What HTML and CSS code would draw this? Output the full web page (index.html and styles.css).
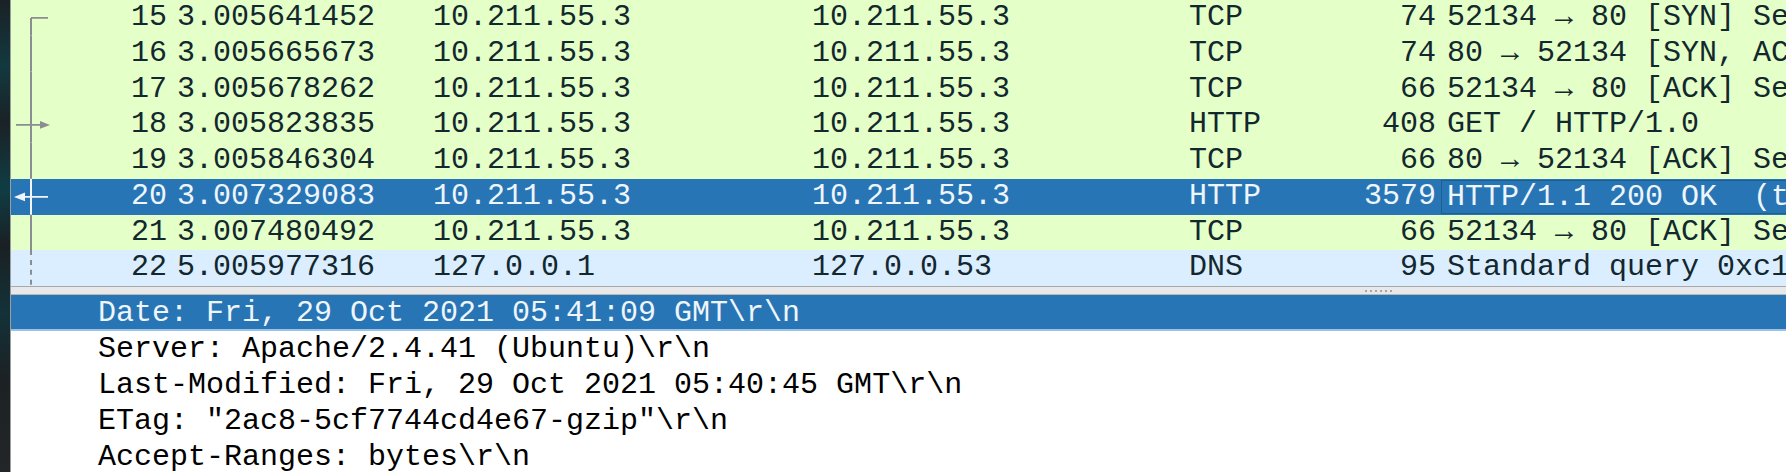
FILE: index.html
```html
<!DOCTYPE html>
<html>
<head>
<meta charset="utf-8">
<link rel="stylesheet" href="styles.css">
</head>
<body>
<div class="app">
  <div class="desk"></div>
  <div class="main">
    <div class="plist">
      <div class="row green">
        <div class="c no"><svg class="tree" viewBox="0 0 40 36" preserveAspectRatio="none"><path d="M20 18 V36 M20 18 H37" class="ln"/></svg><span>15</span></div>
        <div class="c time">3.005641452</div>
        <div class="c src">10.211.55.3</div>
        <div class="c dst">10.211.55.3</div>
        <div class="c proto">TCP</div>
        <div class="c len">74</div>
        <div class="c info">52134 → 80 [SYN] Seq=0 Win=64240 Len=0 MSS=1460 SACK_PERM=1</div>
      </div>
      <div class="row green">
        <div class="c no"><svg class="tree" viewBox="0 0 40 36" preserveAspectRatio="none"><path d="M20 0 V36" class="ln"/></svg><span>16</span></div>
        <div class="c time">3.005665673</div>
        <div class="c src">10.211.55.3</div>
        <div class="c dst">10.211.55.3</div>
        <div class="c proto">TCP</div>
        <div class="c len">74</div>
        <div class="c info">80 → 52134 [SYN, ACK] Seq=0 Ack=1 Win=65160 Len=0</div>
      </div>
      <div class="row green">
        <div class="c no"><svg class="tree" viewBox="0 0 40 36" preserveAspectRatio="none"><path d="M20 0 V36" class="ln"/></svg><span>17</span></div>
        <div class="c time">3.005678262</div>
        <div class="c src">10.211.55.3</div>
        <div class="c dst">10.211.55.3</div>
        <div class="c proto">TCP</div>
        <div class="c len">66</div>
        <div class="c info">52134 → 80 [ACK] Seq=1 Ack=1 Win=64256 Len=0</div>
      </div>
      <div class="row green">
        <div class="c no"><svg class="tree" viewBox="0 0 40 36" preserveAspectRatio="none"><path d="M20 0 V36 M5 18 H31" class="ln"/><path d="M29 14 L39 18 L29 22 Z" class="hd"/></svg><span>18</span></div>
        <div class="c time">3.005823835</div>
        <div class="c src">10.211.55.3</div>
        <div class="c dst">10.211.55.3</div>
        <div class="c proto">HTTP</div>
        <div class="c len">408</div>
        <div class="c info">GET / HTTP/1.0</div>
      </div>
      <div class="row green">
        <div class="c no"><svg class="tree" viewBox="0 0 40 36" preserveAspectRatio="none"><path d="M20 0 V36" class="ln"/></svg><span>19</span></div>
        <div class="c time">3.005846304</div>
        <div class="c src">10.211.55.3</div>
        <div class="c dst">10.211.55.3</div>
        <div class="c proto">TCP</div>
        <div class="c len">66</div>
        <div class="c info">80 → 52134 [ACK] Seq=1 Ack=343 Win=65152 Len=0</div>
      </div>
      <div class="row sel">
        <div class="c no"><svg class="tree" viewBox="0 0 40 36" preserveAspectRatio="none"><path d="M20 0 V36 M12 18 H37" class="ln w"/><path d="M3 18 L14 13.5 L14 22.5 Z" class="hd w"/></svg><span>20</span></div>
        <div class="c time">3.007329083</div>
        <div class="c src">10.211.55.3</div>
        <div class="c dst">10.211.55.3</div>
        <div class="c proto">HTTP</div>
        <div class="c len">3579</div>
        <div class="c info">HTTP/1.1 200 OK  (text/html)</div>
      </div>
      <div class="row green">
        <div class="c no"><svg class="tree" viewBox="0 0 40 36" preserveAspectRatio="none"><path d="M20 0 V36" class="ln"/></svg><span>21</span></div>
        <div class="c time">3.007480492</div>
        <div class="c src">10.211.55.3</div>
        <div class="c dst">10.211.55.3</div>
        <div class="c proto">TCP</div>
        <div class="c len">66</div>
        <div class="c info">52134 → 80 [ACK] Seq=343 Ack=3514 Win=63872 Len=0</div>
      </div>
      <div class="row blue">
        <div class="c no"><svg class="tree" viewBox="0 0 40 36" preserveAspectRatio="none"><path d="M20 0 V36" class="ln dash"/></svg><span>22</span></div>
        <div class="c time">5.005977316</div>
        <div class="c src">127.0.0.1</div>
        <div class="c dst">127.0.0.53</div>
        <div class="c proto">DNS</div>
        <div class="c len">95</div>
        <div class="c info">Standard query 0xc1a7 A connectivity-check.ubuntu.com OPT</div>
      </div>
    </div>
    <div class="splitter"><span class="grip"><i></i><i></i><i></i><i></i><i></i><i></i></span></div>
    <div class="details">
      <div class="drow dsel">Date: Fri, 29 Oct 2021 05:41:09 GMT\r\n</div>
      <div class="drow">Server: Apache/2.4.41 (Ubuntu)\r\n</div>
      <div class="drow">Last-Modified: Fri, 29 Oct 2021 05:40:45 GMT\r\n</div>
      <div class="drow">ETag: "2ac8-5cf7744cd4e67-gzip"\r\n</div>
      <div class="drow">Accept-Ranges: bytes\r\n</div>
    </div>
  </div>
</div>
</body>
</html>
```
FILE: styles.css
```css
* { box-sizing: border-box; }
html, body { margin: 0; padding: 0; }
body {
  width: 1786px;
  height: 472px;
  overflow: hidden;
  background: #1e2326;
  font-family: "Liberation Mono", "DejaVu Sans Mono", monospace;
  font-size: 30px;
}
.app {
  display: flex;
  height: 472px;
}
.desk {
  width: 10px;
  flex: none;
  background: linear-gradient(170deg, #1a2124 0%, #12393f 14%, #1b2225 26%, #0f3d44 40%, #1a2023 52%, #133238 66%, #1c2124 80%, #222629 100%);
}
.main {
  flex: 1;
  min-width: 0;
  display: flex;
  flex-direction: column;
  border-left: 1px solid #9c9fa0;
  background: #ffffff;
}
.plist {
  flex: none;
}
.row {
  display: grid;
  grid-template-columns: 162px 255px 379px 378px 152px 104px 1fr;
  height: 35.75px;
  line-height: 35.75px;
  color: #12272e;
  white-space: pre;
  overflow: hidden;
}
.green { background: #e4ffc7; }
.blue { background: #daeeff; }
.sel { background: #2875b5; color: #eef5fb; }
.c {
  padding: 0 5px;
  overflow: hidden;
}
.no {
  display: flex;
  justify-content: space-between;
  padding-left: 0;
  padding-right: 6px;
}
.tree {
  width: 40px;
  height: 100%;
  flex: none;
}
.ln { stroke: #8b8e90; stroke-width: 2; fill: none; }
.hd { fill: #8b8e90; }
.ln.w { stroke: #f2f6fa; }
.hd.w { fill: #f2f6fa; }
.dash { stroke-dasharray: 5 5; }
.time { padding-left: 4px; }
.src { padding-left: 5px; }
.dst { padding-left: 5px; }
.proto { padding-left: 4px; }
.len { text-align: right; padding-right: 5px; }
.info { padding-left: 6px; padding-right: 0; }
.sel .info {
  border: 1px solid #1c5d93;
  border-right: none;
  padding-left: 5px;
  line-height: 32px;
  margin: 1px 0 1px 0;
}
.splitter {
  flex: none;
  height: 9px;
  background: #e8e8e8;
  border-top: 1px solid #a7a9aa;
  border-bottom: 1px solid #b6b8b9;
  display: flex;
  align-items: center;
  padding-left: 1354px;
}
.grip {
  display: flex;
  gap: 3px;
}
.grip i {
  width: 2px;
  height: 2px;
  background: #a4a6a7;
}
.details {
  flex: 1;
  background: #ffffff;
  color: #000000;
}
.drow {
  height: 36px;
  line-height: 36px;
  padding-left: 87px;
  white-space: pre;
}
.dsel {
  background: #2875b5;
  color: #eef5fb;
  box-shadow: inset 0 -2px 0 #9ac2e6;
}
```
